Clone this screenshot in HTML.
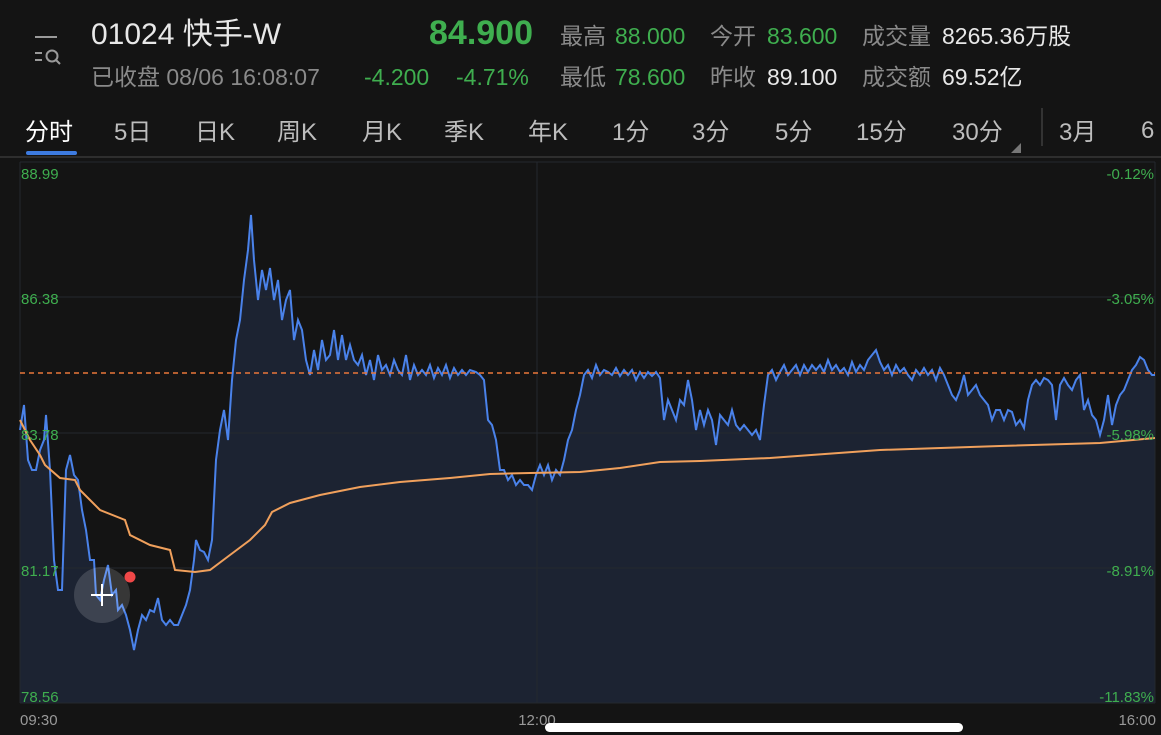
<!DOCTYPE html>
<html><head><meta charset="utf-8"><style>
body{margin:0;width:1161px;height:735px;background:#141414;overflow:hidden;font-family:"Liberation Sans","Noto Sans CJK SC",sans-serif;position:relative}
.a{position:absolute;white-space:nowrap}
.g{color:#3fae4f}.w{color:#e8e8e8}.s{color:#8a8a8a}
.row{position:absolute;white-space:nowrap;font-size:23px;line-height:30px}
.row span{display:inline-block}
.tab{position:absolute;top:112px;font-size:24px;color:#bdbdbd}
</style></head><body>
<svg class="a" style="left:33px;top:33px" width="32" height="34" viewBox="0 0 32 34"><g stroke="#9a9a9a" stroke-width="2" fill="none"><line x1="2" y1="4" x2="24" y2="4"/><line x1="2" y1="20" x2="9" y2="20"/><line x1="2" y1="27" x2="9" y2="27"/><circle cx="19" cy="23" r="5.5"/><line x1="23" y1="27" x2="27" y2="31"/></g></svg>
<div class="row" style="left:91px;top:15px;line-height:36px"><span class="w" style="width:338px;font-size:30px">01024 快手-W</span><span class="g" style="width:131px;font-size:34px;font-weight:bold">84.900</span><span class="s" style="width:55px">最高</span><span class="g" style="width:95px">88.000</span><span class="s" style="width:57px">今开</span><span class="g" style="width:95px">83.600</span><span class="s" style="width:80px">成交量</span><span class="w">8265.36万股</span></div>
<div class="row" style="left:91px;top:62px"><span class="s" style="width:273px">已收盘 08/06 16:08:07</span><span class="g" style="width:92px">-4.200</span><span class="g" style="width:104px">-4.71%</span><span class="s" style="width:55px">最低</span><span class="g" style="width:95px">78.600</span><span class="s" style="width:57px">昨收</span><span class="w" style="width:95px">89.100</span><span class="s" style="width:80px">成交额</span><span class="w">69.52亿</span></div>
<div class="tab" style="left:25px;color:#fff">分时</div>
<div class="tab" style="left:114px">5日</div>
<div class="tab" style="left:195px">日K</div>
<div class="tab" style="left:277px">周K</div>
<div class="tab" style="left:362px">月K</div>
<div class="tab" style="left:444px">季K</div>
<div class="tab" style="left:528px">年K</div>
<div class="tab" style="left:612px">1分</div>
<div class="tab" style="left:692px">3分</div>
<div class="tab" style="left:775px">5分</div>
<div class="tab" style="left:856px">15分</div>
<div class="tab" style="left:952px">30分</div>
<div class="tab" style="left:1059px">3月</div>
<div class="tab" style="left:1141px;top:117px">6</div>
<div class="a" style="left:1041px;top:108px;width:2px;height:38px;background:#333"></div>
<div class="a" style="left:1011px;top:143px;width:0;height:0;border-left:10px solid transparent;border-bottom:10px solid #777"></div>
<div class="a" style="left:26px;top:151px;width:51px;height:4px;border-radius:2px;background:#3d7be0"></div>
<div class="a" style="left:0;top:156px;width:1161px;height:2px;background:#2e2e2e"></div>
<svg class="a" style="left:0;top:0" width="1161" height="735">
<polygon id="f" fill="#1c2332" points=""/>
<g stroke="#24282e" stroke-width="1"><line x1="20" y1="162" x2="1155" y2="162"/><line x1="20" y1="297" x2="1155" y2="297"/><line x1="20" y1="433" x2="1155" y2="433"/><line x1="20" y1="568" x2="1155" y2="568"/><line x1="20" y1="703" x2="1155" y2="703"/><line x1="537" y1="162" x2="537" y2="703"/><line x1="20" y1="162" x2="20" y2="703"/><line x1="1155" y1="162" x2="1155" y2="703"/></g>
<polyline id="p" fill="none" stroke="#4a82ea" stroke-width="2" points="20,430 24,405 28,460 32,470 36,470 40,450 44,440 46,415 50,470 54,560 58,590 62,590 66,470 70,455 74,475 78,480 82,510 86,530 90,560 94,560 96,595 100,600 104,580 108,565 112,595 116,590 118,610 122,605 126,615 130,630 134,650 138,630 142,615 146,620 150,610 154,612 158,598 162,620 166,625 170,620 174,625 178,625 182,615 186,605 190,590 194,560 196,540 200,550 204,552 208,560 212,540 216,460 220,430 224,410 228,440 232,380 236,340 240,320 244,280 248,250 251,215 254,260 258,300 262,270 266,290 270,268 274,300 278,280 282,320 286,300 290,290 294,340 298,320 302,330 306,360 310,375 314,350 318,370 322,340 326,360 330,355 334,330 338,360 342,335 346,360 350,345 354,360 358,365 362,355 366,375 370,360 374,380 378,355 382,370 386,365 390,375 394,360 398,370 402,375 406,355 410,380 414,365 418,375 422,370 426,375 430,365 434,378 438,368 442,375 446,365 450,378 454,368 458,375 462,370 466,375 470,370 476,372 480,375 484,380 488,420 492,425 496,440 500,470 504,470 508,480 512,475 516,485 520,480 524,485 528,485 532,490 536,475 540,465 544,475 548,465 552,480 556,470 560,475 564,460 568,440 572,430 576,410 580,395 584,375 588,370 592,378 596,365 600,375 604,370 608,372 612,375 616,368 620,376 624,370 628,375 632,370 636,380 640,372 644,378 648,372 652,376 656,372 660,378 664,420 668,400 672,410 676,420 680,400 684,405 688,380 692,400 696,430 700,410 704,425 708,410 712,420 716,445 720,415 724,420 728,425 732,410 736,425 740,430 744,425 748,430 752,435 756,430 760,440 764,405 768,375 772,370 776,380 780,372 784,365 788,375 792,370 796,365 800,375 804,365 808,372 812,365 816,370 820,365 824,372 828,360 832,370 836,365 840,372 844,368 848,375 852,362 856,372 860,365 864,370 868,360 872,355 876,350 880,362 884,370 888,365 892,375 896,365 900,372 904,368 908,375 912,380 916,370 920,375 924,368 928,375 932,370 936,380 940,368 944,375 948,385 952,395 956,400 960,390 964,375 968,395 972,390 976,385 980,395 984,400 988,405 992,420 996,410 1000,410 1004,420 1008,410 1012,412 1016,425 1020,420 1024,428 1028,400 1032,385 1036,380 1040,385 1044,378 1048,380 1052,385 1056,420 1060,385 1064,378 1068,385 1072,390 1076,380 1080,375 1084,410 1088,400 1092,415 1096,420 1100,435 1104,420 1108,395 1112,425 1116,405 1120,395 1124,390 1128,380 1132,370 1136,365 1140,357 1144,360 1148,370 1152,375 1155,375"/>
<line x1="20" y1="373" x2="1155" y2="373" stroke="#e9763a" stroke-width="1.5" stroke-dasharray="5,4"/>
<polyline fill="none" stroke="#f0a05c" stroke-width="2" points="20,420 30,440 40,455 45,465 60,478 75,480 80,490 100,510 125,520 130,535 150,545 170,550 175,570 195,572 210,570 230,555 250,540 265,525 272,512 290,503 320,495 360,487 400,482 450,478 490,474 530,473 580,472 620,468 660,462 700,461 770,458 880,450 1000,446 1100,443 1155,438"/>
<circle cx="102" cy="595" r="28" fill="#ffffff" fill-opacity="0.15"/>
<g stroke="#fff" stroke-width="2"><line x1="91" y1="595" x2="113" y2="595"/><line x1="102" y1="584" x2="102" y2="606"/></g>
<circle cx="130" cy="577" r="5.5" fill="#f04848"/>
<g font-size="15" fill="#3fae4f" font-family="Liberation Sans,sans-serif"><text x="21" y="179">88.99</text><text x="21" y="304">86.38</text><text x="21" y="440">83.78</text><text x="21" y="576">81.17</text><text x="21" y="702">78.56</text>
<text x="1154" y="179" text-anchor="end">-0.12%</text><text x="1154" y="304" text-anchor="end">-3.05%</text><text x="1154" y="440" text-anchor="end">-5.98%</text><text x="1154" y="576" text-anchor="end">-8.91%</text><text x="1154" y="702" text-anchor="end">-11.83%</text></g>
<g font-size="15" fill="#999" font-family="Liberation Sans,sans-serif"><text x="20" y="725">09:30</text><text x="537" y="725" text-anchor="middle">12:00</text><text x="1156" y="725" text-anchor="end">16:00</text></g>
<rect x="545" y="723" width="418" height="9" rx="4.5" fill="#fff"/>
</svg>
<script>
document.getElementById('f').setAttribute('points','20,703 '+document.getElementById('p').getAttribute('points')+' 1155,703');
</script>
</body></html>
